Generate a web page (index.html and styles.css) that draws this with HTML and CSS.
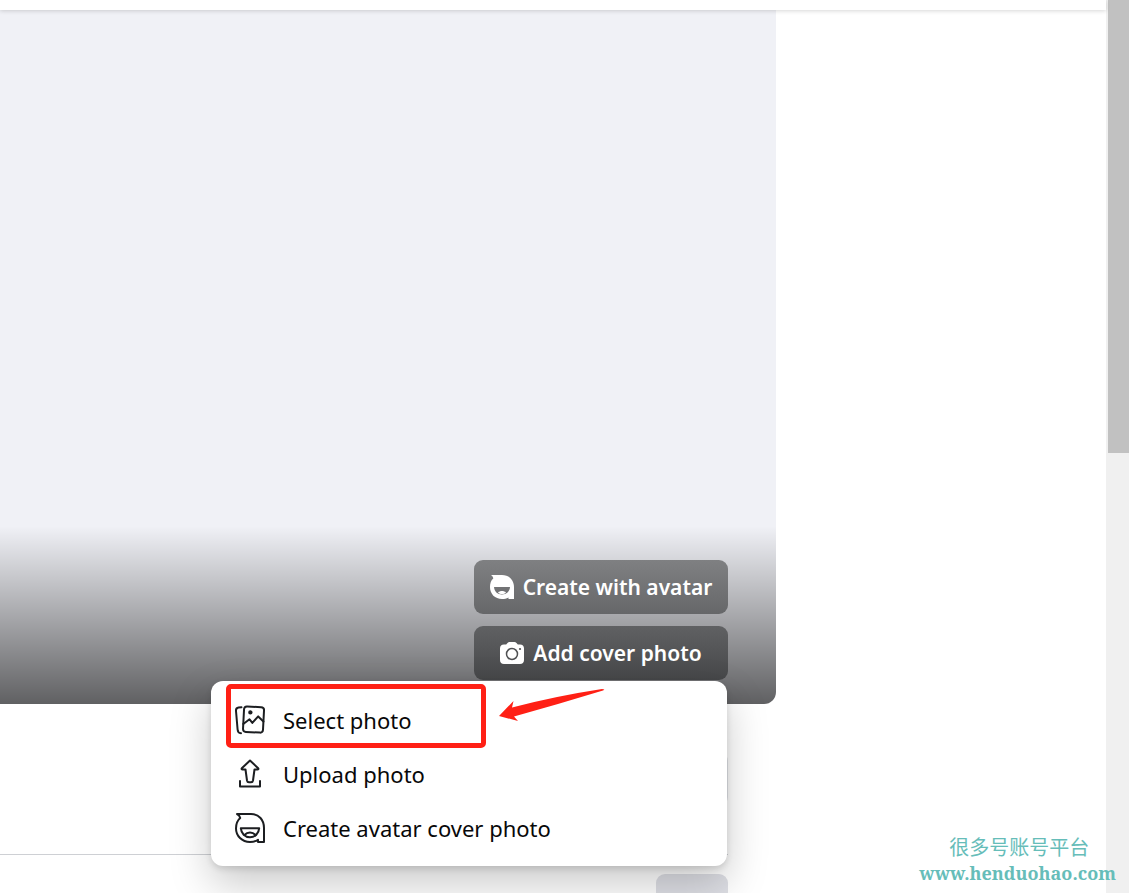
FILE: index.html
```html
<!DOCTYPE html>
<html lang="en">
<head>
<meta charset="utf-8">
<title>Cover photo</title>
<link rel="stylesheet" href="styles.css">
</head>
<body>
<div class="page">
  <header class="topbar"></header>
  <main class="profile">
    <section class="cover">
      <div class="actions">
        <button class="cover-btn light" type="button">
          <svg width="24" height="24" viewBox="0 0 24 24"><path fill="#fff" fill-rule="evenodd" d="M1 0H12C19 0 24 5 24 12V24H18.500V22.500C16.500 23.500 14.500 24 12 24C5 24 0 19 0 12C0 8.500 1 5.500 3.300 3.600C3.100 2 2.300 1 1 0ZM4 12C4.300 16.500 7.500 19.500 12 19.500S19.700 16.500 20 12Z"/><path fill="#fff" d="M8 17.500C10 15.500 14 15.500 16 17.500C14 19.500 10 19.500 8 17.500Z"/></svg>
          <span>Create with avatar</span>
        </button>
        <button class="cover-btn dark" type="button" aria-haspopup="menu" aria-expanded="true">
          <svg width="24" height="22" viewBox="0 0 24 22"><path fill="#fff" d="M4 2.500H6.200L7.500 1C8 .3 8.800 0 9.600 0H14.400C15.200 0 16 .3 16.500 1L17.800 2.500H20C22.500 2.500 24 4 24 6.500V18C24 20.500 22.500 22 20 22H4C1.500 22 0 20.500 0 18V6.500C0 4 1.500 2.500 4 2.500Z"/><circle cx="12" cy="12" r="5.500" fill="none" stroke="#505153" stroke-width="1.500"/><circle cx="20" cy="7" r="1.100" fill="#505153"/></svg>
          <span>Add cover photo</span>
        </button>
        <div class="menu" role="menu">
          <button class="menu-item" type="button" role="menuitem">
            <svg class="line-icon" width="30" height="30" viewBox="0 0 30 30"><g transform="rotate(3 19 15)"><rect x="8.500" y="1.800" width="20" height="25.500" rx="3"/><path d="M8.500 19.500L14.500 14.500L17.500 18L23 11.200L28.500 16"/><circle cx="15" cy="7.600" r="1.200" fill="#1c1e21"/></g><path d="M6.500 2.300L3.500 2.600C1.700 2.900 .8 4 1 6L2.600 24.500C2.800 27 4 28.200 6 28.300"/></svg>
            <span>Select photo</span>
          </button>
          <button class="menu-item" type="button" role="menuitem">
            <svg class="line-icon" width="30" height="30" viewBox="0 0 30 30"><path d="M15 1.500L6.800 9.300C6.300 10 6.700 10.500 7.500 10.500H10.500L12 21.500C12.200 22.700 12.700 23.300 14 23.300H16C17.300 23.300 17.800 22.700 18 21.500L19.500 10.500H22.500C23.300 10.500 23.700 10 23.200 9.300Z"/><path d="M5 22V27.500H25V22"/></svg>
            <span>Upload photo</span>
          </button>
          <button class="menu-item" type="button" role="menuitem">
            <svg class="line-icon" width="30" height="30" viewBox="0 0 30 30"><path d="M2 1H16C24 1 29 7 29 15V29H23V26.700C20.500 28.500 18 29 15 29C7 29 1 23 1 15.500C1 11 2.500 7.300 5.200 5C4.800 3 3.500 1.700 2 1Z"/><path d="M5.800 15.200H24.200C23.800 20.500 20 24.200 15 24.200S6.200 20.500 5.800 15.200Z"/><path d="M9.500 22C12.500 18.600 17.500 18.600 20.500 22"/></svg>
            <span>Create avatar cover photo</span>
          </button>
          <div class="highlight"></div>
          <svg class="arrow" width="106" height="34" viewBox="0 0 106 34"><path fill="#ff2015" d="M0 27L14.500 12L13 18.500Q57 7 103 0Q107 0 104 1.500Q60 15 15 27.500L19 32Z"/></svg>
        </div>
      </div>
    </section>
    <section class="details"><button class="edit" type="button" aria-label="Edit"></button></section>
    <section class="tabs"><button class="more" type="button" aria-label="More"></button></section>
  </main>
</div>
<div class="scrollbar"><div class="thumb"></div></div>
<aside class="watermark">
  <span class="mark-name" lang="zh">很多号账号平台</span>
  <span class="mark-url">www.henduohao.com</span>
</aside>
</body>
</html>
```
FILE: styles.css
```css
* { box-sizing: border-box; }
body {
  margin: 0;
  height: 100vh;
  display: flex;
  overflow: hidden;
  background: #fff;
  font-family: "Segoe UI", "Noto Sans", sans-serif;
}
button { border: 0; font: inherit; cursor: pointer; }
.page { flex: 1; display: flex; flex-direction: column; }
.topbar {
  flex: none;
  height: 10px;
  background: #fff;
  box-shadow: 0 1px 4px rgba(0, 0, 0, .16);
  z-index: 1;
}
.profile { width: calc(100% - 330px); }
.cover {
  height: 694px;
  display: flex;
  justify-content: flex-end;
  align-items: flex-end;
  padding: 0 48px 24px 0;
  border-radius: 0 0 12px 0;
  background: linear-gradient(to top, rgba(0, 0, 0, .6), transparent 178px) #f0f1f6;
}
.actions {
  position: relative;
  display: flex;
  flex-direction: column;
  gap: 12px;
  width: 254px;
}
.cover-btn {
  height: 54px;
  display: flex;
  align-items: center;
  justify-content: center;
  gap: 9px;
  padding: 0;
  border-radius: 9px;
  color: #fff;
  font-size: 21px;
  font-weight: 600;
  white-space: nowrap;
}
.light { background: linear-gradient(#7f8082, #666769); }
.dark { background: linear-gradient(#606163, #464749); }
.menu {
  position: absolute;
  top: 121px;
  right: 1px;
  width: 516px;
  padding: 12px 12px 11px;
  display: flex;
  flex-direction: column;
  border-radius: 12px;
  background: #fff;
  box-shadow: 0 18px 42px rgba(0, 0, 0, .21), 0 3px 6px rgba(0, 0, 0, .12);
}
.menu-item {
  height: 54px;
  display: flex;
  align-items: center;
  gap: 18px;
  padding: 0 12px;
  background: none;
  color: #080809;
  font-size: 22px;
}
.line-icon {
  fill: none;
  stroke: #1c1e21;
  stroke-width: 2;
  stroke-linejoin: round;
  stroke-linecap: round;
}
.highlight {
  position: absolute;
  left: 15px;
  top: 3px;
  width: 260px;
  height: 64px;
  border: 5px solid #ff2015;
  border-radius: 5px;
}
.arrow { position: absolute; left: 288px; top: 8px; }
.details {
  height: 151px;
  margin-right: 48px;
  display: flex;
  justify-content: flex-end;
  align-items: flex-end;
  padding-bottom: 48px;
  border-bottom: 1px solid #ced0d4;
}
.edit { width: 160px; height: 54px; border-radius: 9px; background: #e2e4e9; }
.tabs {
  display: flex;
  justify-content: flex-end;
  padding: 19px 48px 0 0;
}
.more { width: 72px; height: 54px; border-radius: 9px; background: #dedfe5; }
.scrollbar { width: 23px; padding-left: 2px; background: #f0f0f0; }
.thumb { height: 453px; background: #c1c1c1; }
.watermark {
  position: absolute;
  right: 13px;
  bottom: 7px;
  display: flex;
  flex-direction: column;
  color: #66bdb9;
}
.mark-name {
  padding-left: 30px;
  font: 400 20px/26px "Noto Sans CJK SC", sans-serif;
}
.mark-url { font: 700 18px/26px "Noto Serif", "DejaVu Serif", serif; }
```
